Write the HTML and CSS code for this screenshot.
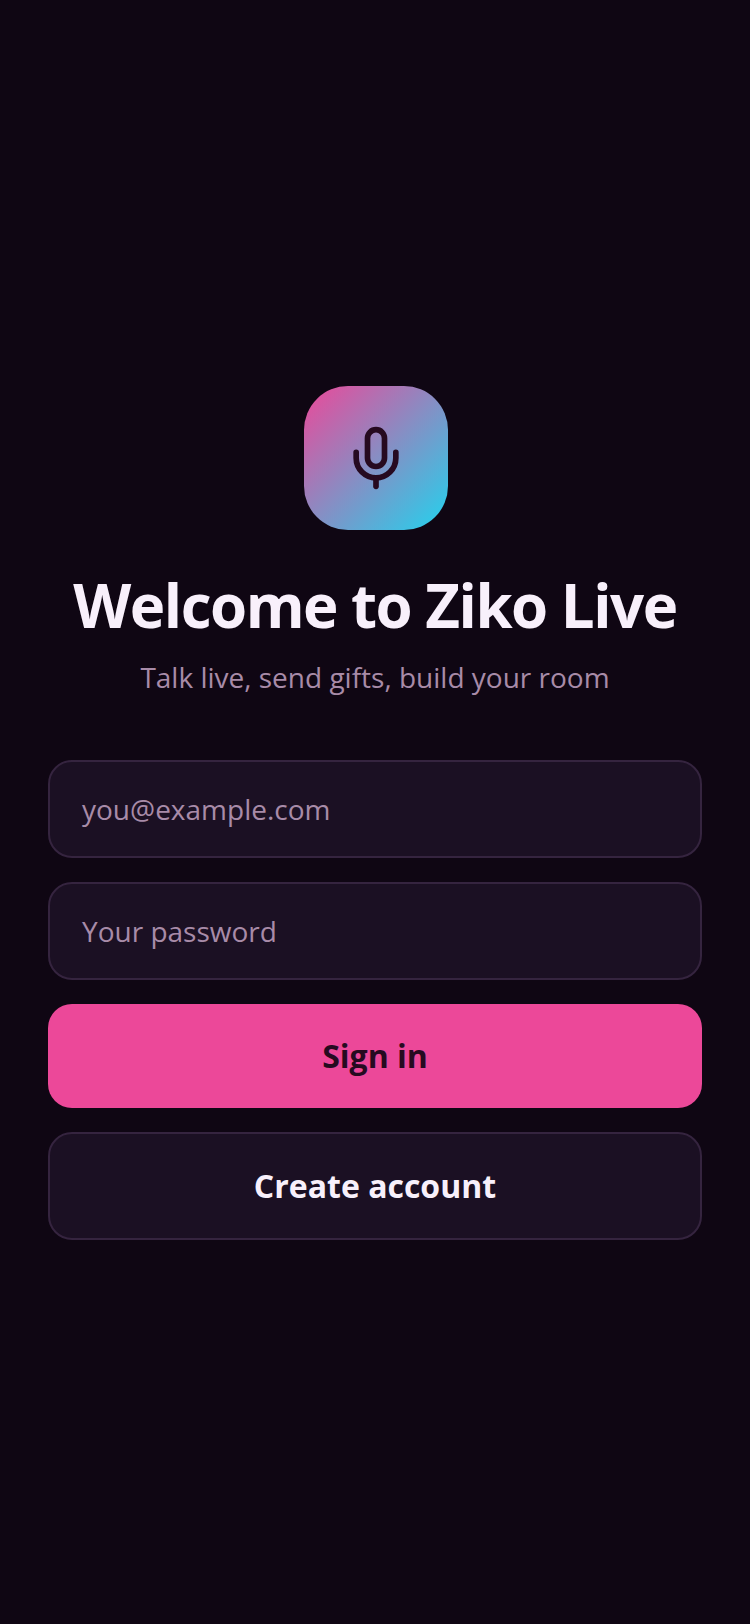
FILE: index.html
```html
<!DOCTYPE html>
<html lang="en">
<head>
<meta charset="utf-8">
<title>Ziko Live</title>
<link rel="stylesheet" href="styles.css">
</head>
<body>
<main class="screen">
  <div class="logo">
    <svg class="mic" viewBox="0 0 24 24" fill="none" stroke="currentColor" stroke-width="2" stroke-linecap="round" stroke-linejoin="round" aria-hidden="true">
      <rect x="9" y="2" width="6" height="13" rx="3"/>
      <path d="M19 10v2a7 7 0 0 1-14 0v-2"/>
      <path d="M12 19v3"/>
    </svg>
  </div>
  <h1 class="title">Welcome to Ziko Live</h1>
  <p class="subtitle">Talk live, send gifts, build your room</p>
  <form class="form">
    <div class="field">you@example.com</div>
    <div class="field">Your password</div>
    <button class="btn btn-primary" type="button">Sign in</button>
    <button class="btn btn-secondary" type="button">Create account</button>
  </form>
</main>
</body>
</html>
```
FILE: styles.css
```css
* { box-sizing: border-box; }
html, body { margin: 0; height: 100%; }
body { background: #0f0613; font-family: "Open Sans", sans-serif; }
.screen {
  min-height: 1624px;
  padding: 2px 48px 0;
  display: flex;
  flex-direction: column;
  align-items: center;
  justify-content: center;
}
.logo {
  width: 144px;
  height: 144px;
  margin-left: 2px;
  border-radius: 44px;
  background: linear-gradient(135deg, #ec4899, #22d3ee);
  display: flex;
  align-items: center;
  justify-content: center;
  color: #260a20;
}
.mic { width: 68px; height: 68px; }
.title {
  margin: 40px 0 0;
  font-size: 60px;
  line-height: 70px;
  font-weight: 700;
  letter-spacing: -1.5px;
  color: #f8f0fb;
}
.subtitle {
  margin: 17px 0 0;
  font-size: 28px;
  line-height: 40px;
  color: #a88ba8;
}
.form {
  width: 100%;
  margin-top: 63px;
  display: flex;
  flex-direction: column;
  gap: 24px;
}
.field {
  height: 98px;
  padding: 0 32px;
  display: flex;
  align-items: center;
  background: #1b1023;
  border: 2px solid #35243f;
  border-radius: 24px;
  font-size: 28px;
  color: #a88ba8;
}
.btn {
  width: 100%;
  font-family: inherit;
  font-size: 32px;
  font-weight: 700;
  border-radius: 24px;
  padding: 0 0 2px;
}
.btn-primary {
  height: 104px;
  background: #ec4899;
  border: 0;
  color: #260a20;
}
.btn-secondary {
  height: 108px;
  background: #1b1023;
  border: 2px solid #35243f;
  color: #f8f0fb;
}
```
